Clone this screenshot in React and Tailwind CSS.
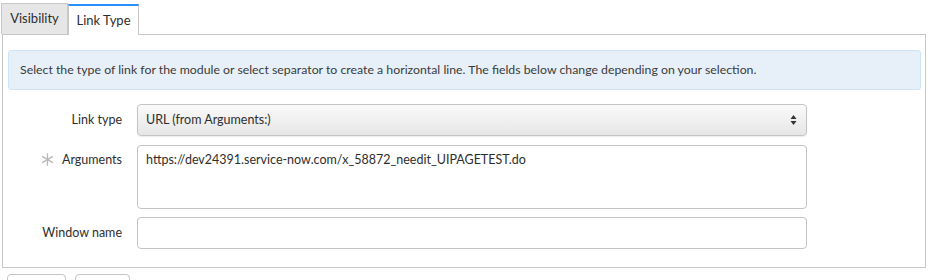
const Asterisk = () => (
  <svg width="13" height="13" viewBox="0 0 13 13" className="mr-[8px] mt-[2px]" stroke="#b8b8b8" strokeWidth="1.3" strokeLinecap="round">
    <line x1="6.5" y1="0.8" x2="6.5" y2="12.2" />
    <line x1="1.6" y1="3.6" x2="11.4" y2="9.4" />
    <line x1="1.6" y1="9.4" x2="11.4" y2="3.6" />
  </svg>
);

const Label = ({ children, required }) => (
  <div className="w-[114px] shrink-0 flex justify-end items-start text-[12.5px] text-[#2e2e2e]">
    {required && <Asterisk />}
    <span>{children}</span>
  </div>
);

export default function App() {
  return (
    <div className="w-[932px] h-[280px] overflow-hidden bg-white font-['Lato','Liberation_Sans',sans-serif] text-[#2e2e2e]">
      {/* Tabs */}
      <div className="flex items-end pt-[3px] h-[34px] ml-[1px]">
        <div className="h-[31px] w-[67px] flex items-center justify-center bg-[#e6e6e6] border border-[#c8c8c8] border-b-0 text-[13px]">
          Visibility
        </div>
        <div className="h-[31px] w-[71px] flex items-center justify-center bg-white border-x border-[#c8c8c8] border-t-2 border-t-[#278efc] -mb-[1px] relative z-10 text-[13px]">
          Link Type
        </div>
      </div>

      {/* Panel */}
      <div className="ml-[2px] w-[924px] h-[234px] border border-[#c8c8c8] pt-[15px] px-[5px]">
        <div className="h-[40px] w-[913px] rounded-[3px] border border-[#cfe3f7] bg-[#e7f0f9] flex items-center px-[11px] text-[12.3px] text-[#3a3a3a]">
          Select the type of link for the module or select separator to create a horizontal line. The fields below change depending on your selection.
        </div>

        <div className="flex flex-col mt-[14px]">
          <div className="flex items-center">
            <Label>Link type</Label>
            <div className="ml-[15px] w-[670px] h-[32px] rounded-[4px] border border-[#c4c4c4] bg-gradient-to-b from-[#fafafa] to-[#e6e6e6] flex items-center justify-between pl-[8px] pr-[9px] text-[12.5px] shadow-[0_1px_1px_rgba(0,0,0,0.08)]">
              <span>URL (from Arguments:)</span>
              <svg width="7" height="12" viewBox="0 0 7 12">
                <path d="M3.5 1 L6.5 5 L0.5 5 Z" fill="#333" />
                <path d="M3.5 11 L6.5 7 L0.5 7 Z" fill="#333" />
              </svg>
            </div>
          </div>

          <div className="flex items-start mt-[9px]">
            <div className="pt-[6px]">
              <Label required>Arguments</Label>
            </div>
            <div className="ml-[15px] w-[670px] h-[64px] rounded-[4px] border border-[#c4c4c4] bg-white px-[8px] pt-[5px] text-[12.5px]">
              https://dev24391.service-now.com/x_58872_needit_UIPAGETEST.do
            </div>
          </div>

          <div className="flex items-center mt-[8px]">
            <Label>Window name</Label>
            <div className="ml-[15px] w-[670px] h-[32px] rounded-[4px] border border-[#c4c4c4] bg-white" />
          </div>
        </div>
      </div>

      {/* Buttons */}
      <div className="flex gap-[9px] ml-[7px] mt-[6px]">
        <div className="w-[59px] h-[30px] rounded-[4px] border border-[#c4c4c4] bg-white" />
        <div className="w-[55px] h-[30px] rounded-[4px] border border-[#c4c4c4] bg-white" />
      </div>
    </div>
  );
}
